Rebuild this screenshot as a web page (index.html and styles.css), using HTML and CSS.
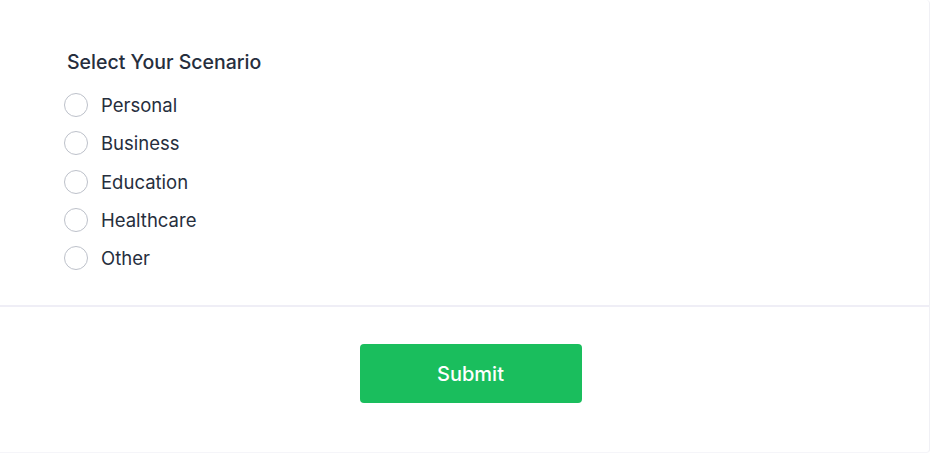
FILE: index.html
```html
<!DOCTYPE html>
<html lang="en">
<head>
<meta charset="utf-8">
<title>Select Your Scenario</title>
<link rel="stylesheet" href="styles.css">
</head>
<body>
<div class="card">
  <form class="form">
    <section class="body">
      <h2 class="title">Select Your Scenario</h2>
      <div class="options">
        <label class="option"><input type="radio" name="scenario" class="radio"><span class="dot"></span><span class="label">Personal</span></label>
        <label class="option"><input type="radio" name="scenario" class="radio"><span class="dot"></span><span class="label">Business</span></label>
        <label class="option"><input type="radio" name="scenario" class="radio"><span class="dot"></span><span class="label">Education</span></label>
        <label class="option"><input type="radio" name="scenario" class="radio"><span class="dot"></span><span class="label">Healthcare</span></label>
        <label class="option"><input type="radio" name="scenario" class="radio"><span class="dot"></span><span class="label">Other</span></label>
      </div>
    </section>
    <footer class="footer">
      <button type="button" class="submit">Submit</button>
    </footer>
  </form>
</div>
</body>
</html>
```
FILE: styles.css
```css
* { box-sizing: border-box; }
html, body { margin: 0; padding: 0; background: #ffffff; }
body {
  font-family: Inter, "Noto Sans", "Liberation Sans", sans-serif;
  color: #262e3d;
}
.card {
  width: 930px;
  height: 453px;
  border-right: 1px solid #f0f0f5;
  border-bottom: 1px solid #f5f5f9;
  border-radius: 0 4px 4px 0;
  background: #fff;
}
.form { display: flex; flex-direction: column; height: 100%; }
.body {
  padding: 49px 64px 0 64px;
  height: 305px;
}
.title {
  margin: 0 0 17px 3px;
  font-size: 19.5px;
  line-height: 27px;
  font-weight: 500;
  color: #262e3d;
}
.options { display: flex; flex-direction: column; gap: 14.25px; }
.option {
  display: flex;
  align-items: center;
  height: 24px;
  cursor: pointer;
}
.radio { position: absolute; opacity: 0; width: 0; height: 0; margin: 0; }
.dot {
  width: 24px;
  height: 24px;
  border-radius: 50%;
  border: 1px solid #bdc1ca;
  background: #fff;
  flex: none;
}
.label {
  margin-left: 13px;
  font-size: 18.5px;
  line-height: 24px;
  color: #262e3d;
}
.footer {
  border-top: 2px solid #efeef6;
  display: flex;
  justify-content: center;
  padding-top: 37px;
  padding-left: 12px;
}
.submit {
  width: 222px;
  height: 59px;
  border: none;
  border-radius: 4px;
  background: #1abe5d;
  color: #fff;
  font-family: inherit;
  font-size: 20px;
  font-weight: 500;
  cursor: pointer;
}
```
